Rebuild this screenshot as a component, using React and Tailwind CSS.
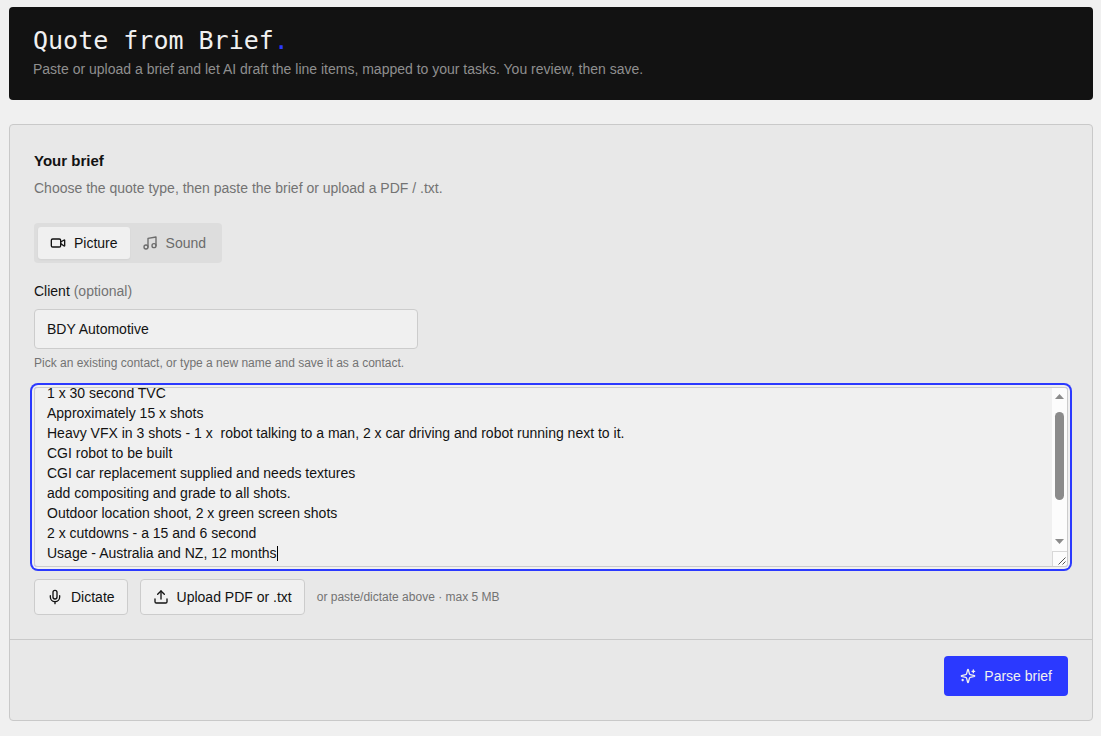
import { useLayoutEffect, useRef, useState } from "react";
import { Mic, Music, Upload, Video } from "lucide-react";

const BRIEF = [
  "1 x 30 second TVC",
  "Approximately 15 x shots",
  "Heavy VFX in 3 shots - 1 x  robot talking to a man, 2 x car driving and robot running next to it.",
  "CGI robot to be built",
  "CGI car replacement supplied and needs textures",
  "add compositing and grade to all shots.",
  "Outdoor location shoot, 2 x green screen shots",
  "2 x cutdowns - a 15 and 6 second",
  "Usage - Australia and NZ, 12 months",
  "",
  "",
  "",
].join("\n");

function SparklesIcon() {
  return (
    <svg
      width="16"
      height="16"
      viewBox="0 0 24 24"
      fill="none"
      stroke="currentColor"
      strokeWidth="2"
      strokeLinecap="round"
      strokeLinejoin="round"
      aria-hidden="true"
    >
      <path d="M9.937 15.5A2 2 0 0 0 8.5 14.063l-6.135-1.582a.5.5 0 0 1 0-.962L8.5 9.936A2 2 0 0 0 9.937 8.5l1.582-6.135a.5.5 0 0 1 .963 0L14.063 8.5A2 2 0 0 0 15.5 9.937l6.135 1.581a.5.5 0 0 1 0 .964L15.5 14.063a2 2 0 0 0-1.437 1.437l-1.582 6.135a.5.5 0 0 1-.963 0z" />
      <path d="M20 3v4M22 5h-4M4 17v2M5 18H3" />
    </svg>
  );
}

function TypeButton({ active, icon: Icon, children, onClick }) {
  return (
    <button
      type="button"
      aria-pressed={active}
      onClick={onClick}
      className={
        active
          ? "flex h-8 items-center gap-2 rounded-[3px] bg-[#f0f0f0] px-3 font-medium text-[#121212] shadow-xs"
          : "flex h-8 items-center gap-2 rounded-[3px] px-3 font-medium text-[#6b6b6b]"
      }
    >
      <Icon size={16} />
      {children}
    </button>
  );
}

function ScrollTrack() {
  return (
    <div
      aria-hidden="true"
      className="pointer-events-none absolute top-px right-px bottom-px flex w-[15px] flex-col items-center overflow-hidden rounded-r-[3px] bg-[#fcfcfc]"
    >
      <svg className="mt-1.5" width="9" height="5" viewBox="0 0 9 5" fill="#8b8b8b">
        <path d="M0 5 4.5 0 9 5z" />
      </svg>
      <div className="mt-[13px] h-22 w-[9px] rounded-full bg-[#8b8b8b]" />
      <svg className="mt-auto mb-[7px]" width="9" height="5" viewBox="0 0 9 5" fill="#8b8b8b">
        <path d="M0 0 4.5 5 9 0z" />
      </svg>
      <div className="flex h-[15px] w-full items-end justify-end border-t border-l border-[#d8d8d8] p-px">
        <svg width="8" height="8" viewBox="0 0 8 8" fill="none" stroke="#555555">
          <path d="M0.5 7.5l7-7M4.5 7.5l3-3" />
        </svg>
      </div>
    </div>
  );
}

export default function App() {
  const [type, setType] = useState("picture");
  const [client, setClient] = useState("BDY Automotive");
  const [brief, setBrief] = useState(BRIEF);
  const area = useRef(null);

  useLayoutEffect(() => {
    area.current.scrollTop = 13;
  }, []);

  return (
    <div className="min-h-screen bg-[#f0f0f0] pt-[7px] pr-2 pb-4 pl-[9px] font-['Liberation_Sans',sans-serif] text-sm text-[#121212]">
      <header className="rounded bg-[#121212] px-6 pt-[18px] pb-[21px]">
        <h1 className="font-['DejaVu_Sans_Mono',monospace] text-[25px] leading-8 text-[#f0f0f0]">
          Quote from Brief<span className="text-[#2b39ff]">.</span>
        </h1>
        <p className="mt-0.5 leading-5 text-[#8f8f8f]">
          Paste or upload a brief and let AI draft the line items, mapped to your tasks. You review, then save.
        </p>
      </header>

      <main className="mt-6 rounded border border-[#c9c9c9] bg-[#e8e8e8]">
        <div className="p-6">
          <h2 className="text-[15px] leading-6 font-semibold">Your brief</h2>
          <p className="mt-[5px] leading-5 text-[#737373]">
            Choose the quote type, then paste the brief or upload a PDF / .txt.
          </p>

          <div className="mt-[25px] inline-flex rounded bg-[#dddddd] p-1">
            <TypeButton active={type === "picture"} icon={Video} onClick={() => setType("picture")}>
              Picture
            </TypeButton>
            <TypeButton active={type === "sound"} icon={Music} onClick={() => setType("sound")}>
              Sound
            </TypeButton>
          </div>

          <label htmlFor="client" className="mt-[18px] block leading-5 font-medium">
            Client <span className="font-normal text-[#737373]">(optional)</span>
          </label>
          <input
            id="client"
            value={client}
            onChange={(e) => setClient(e.target.value)}
            className="mt-2 block h-10 w-full max-w-sm rounded border border-[#cccccc] bg-[#f0f0f0] px-3"
          />
          <p className="mt-1.5 text-xs leading-4 text-[#737373]">
            Pick an existing contact, or type a new name and save it as a contact.
          </p>

          <div className="relative mt-4">
            <textarea
              ref={area}
              aria-label="Brief"
              value={brief}
              onChange={(e) => setBrief(e.target.value)}
              className="block h-45 w-full resize-y overflow-y-scroll rounded border border-[#cccccc] bg-[#f0f0f0] px-3 py-2 leading-5 ring-2 ring-[#2b39ff] ring-offset-2 ring-offset-[#f0f0f0] outline-none"
            />
            <span aria-hidden="true" className="pointer-events-none absolute top-[159px] left-[243px] h-[15px] w-px bg-black" />
            <ScrollTrack />
          </div>

          <div className="mt-3 flex flex-wrap items-center gap-3">
            <button
              type="button"
              className="flex h-9 items-center gap-2 rounded border border-[#cccccc] bg-[#f0f0f0] px-3 font-medium"
            >
              <Mic size={16} />
              Dictate
            </button>
            <button
              type="button"
              className="flex h-9 items-center gap-2 rounded border border-[#cccccc] bg-[#f0f0f0] px-3 font-medium"
            >
              <Upload size={16} />
              Upload PDF or .txt
            </button>
            <span className="text-xs text-[#737373]">or paste/dictate above · max 5 MB</span>
          </div>
        </div>

        <div className="flex justify-end border-t border-[#c9c9c9] px-6 pt-4 pb-6">
          <button
            type="button"
            className="flex h-10 items-center gap-2 rounded bg-[#2b39ff] px-4 font-medium text-[#f0f0f0]"
          >
            <SparklesIcon />
            Parse brief
          </button>
        </div>
      </main>
    </div>
  );
}
